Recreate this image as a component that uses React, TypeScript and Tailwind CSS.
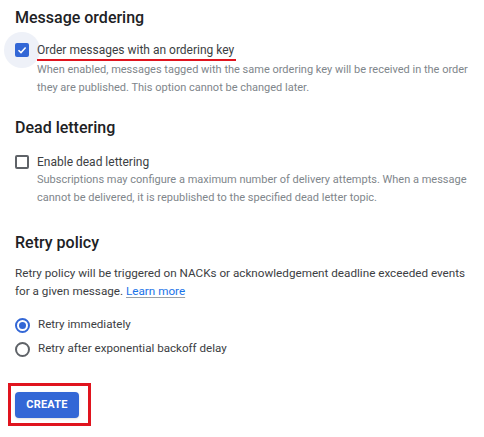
import React from 'react';

function Checkbox({ checked }: { checked: boolean }) {
  return (
    <div className="relative w-[14px] h-[14px] shrink-0">
      {checked && (
        <div className="absolute -left-[11px] -top-[11px] w-[36px] h-[36px] rounded-full bg-[#eef1f8]" />
      )}
      {checked ? (
        <div className="relative w-[14px] h-[14px] rounded-[2px] bg-[#3367d6] flex items-center justify-center">
          <svg width="10" height="10" viewBox="0 0 10 10" fill="none">
            <path d="M1.5 5.2 L4 7.6 L8.6 2.6" stroke="white" strokeWidth="1.5" />
          </svg>
        </div>
      ) : (
        <div className="relative w-[14px] h-[14px] rounded-[2px] border-2 border-[#5f6368] bg-white" />
      )}
    </div>
  );
}

function Radio({ checked }: { checked: boolean }) {
  return (
    <div
      className={
        checked
          ? 'w-[15px] h-[15px] rounded-full border-2 border-[#3367d6] flex items-center justify-center shrink-0'
          : 'w-[15px] h-[15px] rounded-full border-2 border-[#5f6368] shrink-0'
      }
    >
      {checked && <div className="w-[7px] h-[7px] rounded-full bg-[#3367d6]" />}
    </div>
  );
}

export default function App() {
  return (
    <div className="w-[484px] h-[437px] bg-white overflow-hidden pl-[15px] pt-[6px] font-['Roboto',sans-serif]">
      {/* Message ordering */}
      <h2 className="text-[16px] font-medium leading-[24px] text-[#202124]">Message ordering</h2>
      <div className="mt-[11px] flex items-center gap-[8px]">
        <Checkbox checked />
        <span className="relative text-[12px] leading-[18px] text-[#3c4043] whitespace-nowrap">
          Order messages with an ordering key
          <span className="absolute left-0 right-[-2px] top-[18px] h-[2px] bg-[#e0141e]" />
        </span>
      </div>
      <p className="ml-[22px] mt-[2px] text-[11px] leading-[17.5px] text-[#80868b] whitespace-nowrap">
        When enabled, messages tagged with the same ordering key will be received in the order
        <br />
        they are published. This option cannot be changed later.
      </p>

      {/* Dead lettering */}
      <h2 className="mt-[20px] text-[16px] font-medium leading-[24px] text-[#202124]">Dead lettering</h2>
      <div className="mt-[13px] flex items-center gap-[8px]">
        <Checkbox checked={false} />
        <span className="text-[12px] leading-[18px] text-[#3c4043] whitespace-nowrap">
          Enable dead lettering
        </span>
      </div>
      <p className="ml-[22px] text-[11px] leading-[18px] text-[#80868b] whitespace-nowrap">
        Subscriptions may configure a maximum number of delivery attempts. When a message
        <br />
        cannot be delivered, it is republished to the specified dead letter topic.
      </p>

      {/* Retry policy */}
      <h2 className="mt-[24px] text-[16px] font-medium leading-[24px] text-[#202124]">Retry policy</h2>
      <p className="mt-[9px] text-[11.7px] leading-[18px] text-[#3c4043] whitespace-nowrap">
        Retry policy will be triggered on NACKs or acknowledgement deadline exceeded events
        <br />
        for a given message.{' '}
        <a className="text-[#1a73e8] underline decoration-[#9aa0a6] underline-offset-2">Learn more</a>
      </p>
      <div className="mt-[13px] flex flex-col">
        <label className="h-[24px] flex items-center gap-[8px]">
          <Radio checked />
          <span className="text-[11.6px] text-[#3c4043]">Retry immediately</span>
        </label>
        <label className="h-[24px] flex items-center gap-[8px]">
          <Radio checked={false} />
          <span className="text-[11.6px] text-[#3c4043]">Retry after exponential backoff delay</span>
        </label>
      </div>

      <div className="mt-[22px] -ml-[7px] inline-block border-[3px] border-[#e0141e] pl-[4px] pr-[9px] py-[5px]">
        <button className="h-[26px] w-[64px] rounded-[4px] bg-[#3367d6] text-white text-[11px] font-bold tracking-[0.2px] shadow-sm">
          CREATE
        </button>
      </div>
    </div>
  );
}
